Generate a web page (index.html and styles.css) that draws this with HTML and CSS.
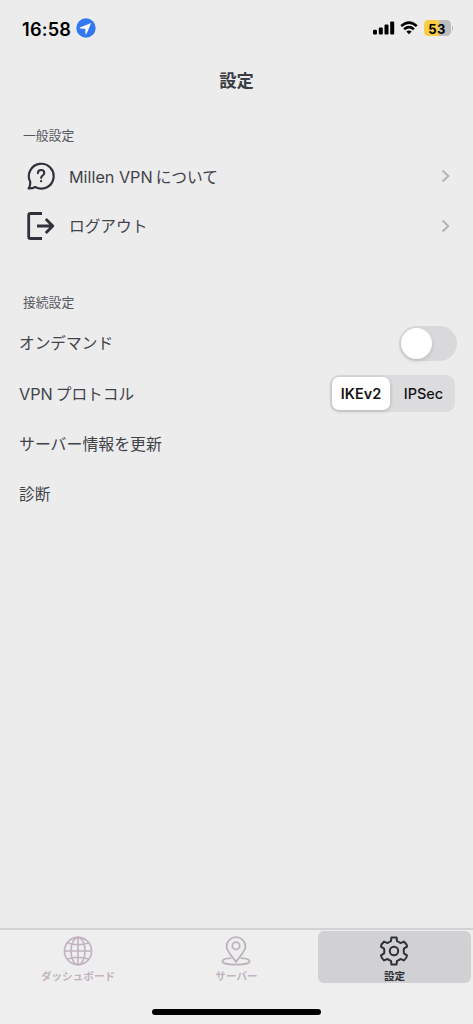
FILE: index.html
```html
<!DOCTYPE html>
<html lang="ja">
<head>
<meta charset="utf-8">
<meta name="viewport" content="width=device-width">
<title>設定</title>
<link rel="stylesheet" href="styles.css">
</head>
<body>
<div class="screen">
  <div class="status">
    <span class="time">16:58</span>
    <svg class="location" width="20" height="20" viewBox="0 0 20 20"><circle cx="10" cy="10" r="9.7" fill="#3478f0"/><path d="M15.2 4.9 3.9 9.6q-.6.5.2.8l5.1.4.4 5.1q.3.8.8.1z" fill="#fff"/></svg>
    <span class="spacer"></span>
    <svg class="signal" width="22" height="14" viewBox="0 0 22 14"><rect x="0" y="8.8" width="4" height="4.7" rx="1.1"/><rect x="5.8" y="6.5" width="4" height="7" rx="1.1"/><rect x="11.5" y="3.6" width="4" height="9.9" rx="1.1"/><rect x="17.2" y=".5" width="4" height="13" rx="1.1"/></svg>
    <svg class="wifi" width="18" height="14" viewBox="0 0 18 14"><path d="M1.2 5.2Q9-2 16.8 5.2M4.1 8.2q4.9-4.1 9.8 0" fill="none" stroke="#000" stroke-width="2.5"/><path d="M9 13.2 6.3 10.5q2.7-2 5.4 0z"/></svg>
    <span class="battery">53</span>
    <span class="battery-cap"></span>
  </div>
  <h1 class="title">設定</h1>

  <section class="group general">
    <h2 class="label">一般設定</h2>
    <div class="row link">
      <svg class="row-icon" width="30" height="30" viewBox="0 0 30 30" fill="none" stroke="#30323b" stroke-width="2.2" stroke-linecap="round" stroke-linejoin="round"><path d="M4.2 20.8A12.4 12.4 0 1 1 9.2 26Q6 27.7 2.6 27.4 4.5 25 4.2 20.8Z"/><path d="M11.9 12.2C11.9 8 18.3 8.2 18.3 12c0 2.5-3.2 2.5-3.2 5" stroke-width="2"/><circle cx="15.1" cy="20.2" r=".5" stroke-width="1.3"/></svg>
      <span class="text"><span class="latin">Millen VPN</span><span class="kana">について</span></span>
      <svg class="chevron" width="9" height="14" viewBox="0 0 9 14"><path d="m1.5 1.5 5.8 5.5-5.8 5.5"/></svg>
    </div>
    <div class="row link">
      <svg class="row-icon" width="30" height="30" viewBox="0 0 30 30" fill="none" stroke="#30323b" stroke-width="2.8" stroke-linejoin="round"><path d="M16 2.5H4.5q-1.8 0-1.8 1.8v21.4q0 1.8 1.8 1.8H16M11 15h15.8M19.8 7.9l7 7.1-7 7.1"/></svg>
      <span class="text">ログアウト</span>
      <svg class="chevron" width="9" height="14" viewBox="0 0 9 14"><path d="m1.5 1.5 5.8 5.5-5.8 5.5"/></svg>
    </div>
  </section>

  <section class="group">
    <h2 class="label">接続設定</h2>
    <div class="row">
      <span class="text">オンデマンド</span>
      <span class="switch"><span class="knob"></span></span>
    </div>
    <div class="row protocol">
      <span class="text"><span class="latin">VPN</span><span class="kana">プロトコル</span></span>
      <div class="segments"><span class="segment selected">IKEv2</span><span class="segment">IPSec</span></div>
    </div>
    <div class="row"><span class="text update">サーバー情報を更新</span></div>
    <div class="row"><span class="text">診断</span></div>
  </section>

  <nav class="tabs">
    <div class="tab">
      <svg width="30" height="30" viewBox="0 0 30 30" fill="none" stroke="#c1b3c1" stroke-width="1.6"><circle cx="15" cy="15" r="13.6"/><ellipse cx="15" cy="15" rx="7" ry="13.6"/><path d="M15 1.4v27.2M1.4 15h27.2M4.5 7q10.5 3.5 21 0M4.5 23q10.5-3.5 21 0"/></svg>
      <span>ダッシュボード</span>
    </div>
    <div class="tab">
      <svg width="30" height="30" viewBox="0 0 30 30" fill="none" stroke="#bdb3be" stroke-width="1.8" stroke-linejoin="round"><path d="M15 26C12.2 21.5 5.6 15.5 5.6 10.6a9.4 9.4 0 0 1 18.8 0C24.4 15.5 17.8 21.5 15 26Z"/><circle cx="15" cy="9.8" r="3.7"/><path d="M10.3 22.2C5 22.5 1.4 23.8 1.4 25.4c0 1.9 6 3.2 13.6 3.2s13.6-1.3 13.6-3.2c0-1.6-3.6-2.9-8.9-3.2"/></svg>
      <span>サーバー</span>
    </div>
    <div class="tab active">
      <svg width="30" height="30" viewBox="0 0 30 30" fill="none" stroke="#2d3039" stroke-width="2" stroke-linejoin="round"><path d="M12.4 1.5h5.2l.4 3.6q1.9.6 3.4 2l3.5-1.5q3 2.3 3.1 5.1l-3.1 2q-.5 2.3 0 4.6l3.1 2q-.1 2.8-3.1 5.1l-3.5-1.5q-1.5 1.4-3.4 2l-.4 3.6h-5.2l-.4-3.6q-1.9-.6-3.4-2l-3.5 1.5q-3-2.3-3.1-5.1l3.1-2q.5-2.3 0-4.6l-3.1-2q.1-2.8 3.1-5.1l3.5 1.5q1.5-1.4 3.4-2z"/><circle cx="15" cy="15" r="4.2"/></svg>
      <span>設定</span>
    </div>
  </nav>
  <div class="home"></div>
</div>
</body>
</html>
```
FILE: styles.css
```css
* { box-sizing: border-box; }
body { margin: 0; background: #ececec; color: #41434b; font-family: Inter, "Noto Sans CJK JP", sans-serif; }
.screen { height: 1024px; display: flex; flex-direction: column; overflow: hidden; }
svg { display: block; flex: none; }
h1, h2 { margin: 0; }

.status { height: 56px; padding: 0 20px 0 22px; display: flex; align-items: center; color: #000; }
.time { width: 54px; padding-top: 1px; font-size: 18.2px; font-weight: 600; letter-spacing: .2px; white-space: nowrap; }
.spacer { flex: 1; }
.wifi { margin: 0 6px 0 5px; }
.battery { width: 27px; height: 16px; padding-top: 1px; border-radius: 4.5px; background: linear-gradient(90deg, #fccd42 54%, #bdbdc0 54%); font-size: 13px; font-weight: 700; line-height: 16px; text-align: center; letter-spacing: .3px; }
.battery-cap { width: 1.5px; height: 5px; margin-left: 1px; border-radius: 0 2px 2px 0; background: #bdbdc0; }

.title { height: 48px; padding-top: 1px; font-size: 17.3px; font-weight: 700; line-height: 48px; text-align: center; color: #3b3d45; }
.group { padding: 0 16px 0 19px; }
.general { height: 167px; padding-top: 15px; }
.group + .group { padding-top: 15px; }
.label { height: 32px; padding: 1px 0 0 4px; font-size: 12.8px; font-weight: 400; line-height: 32px; color: #55575e; }
.row { height: 50.3px; display: flex; align-items: center; justify-content: space-between; font-size: 16px; line-height: 24px; }
.link { height: 50px; padding: 0 7px; }
.row-icon { margin-right: 13px; }
.link .text { flex: 1; }
.text { padding-top: 2px; white-space: nowrap; font-size: 15.7px; }
.update { font-size: 15.9px; }
.latin { margin-right: 3px; font-size: 16.2px; }
.chevron path { fill: none; stroke: #b4b4b6; stroke-width: 2; }

.switch { width: 58px; height: 35px; padding: 2px; border-radius: 18px; background: #d9d9dc; }
.knob { display: block; width: 31px; height: 31px; border-radius: 50%; background: #fff; box-shadow: 0 2px 4px #0002; }
.protocol { padding-right: 2px; }
.segments { width: 125px; height: 37px; padding: 2px; display: flex; border-radius: 9px; background: #dcdcdf; }
.segment { flex: 1; padding-left: 4px; border-radius: 7px; font-size: 14.5px; font-weight: 500; line-height: 33px; text-align: center; color: #151515; }
.selected { flex: 0 0 58px; padding-left: 0; background: #fff; box-shadow: 0 1px 4px #0003; font-weight: 600; }

.tabs { height: 96px; margin-top: auto; padding: 1px 2px 0 1px; display: grid; grid-template-columns: 154px 1fr 153px; border-top: 2px solid #d1d2d3; background: #eee; }
.tab { height: 52px; padding-top: 5px; display: flex; flex-direction: column; align-items: center; color: #c1b3c1; font-size: 10.6px; font-weight: 700; line-height: 18px; }
.tab svg { margin-left: -1px; }
.tab span { margin-top: 2px; white-space: nowrap; }
.active { border-radius: 6px; background: #d1d1d4; color: #2d3039; }
.home { position: absolute; left: 152px; top: 1009px; width: 169px; height: 6px; border-radius: 3px; background: #000; }
```
